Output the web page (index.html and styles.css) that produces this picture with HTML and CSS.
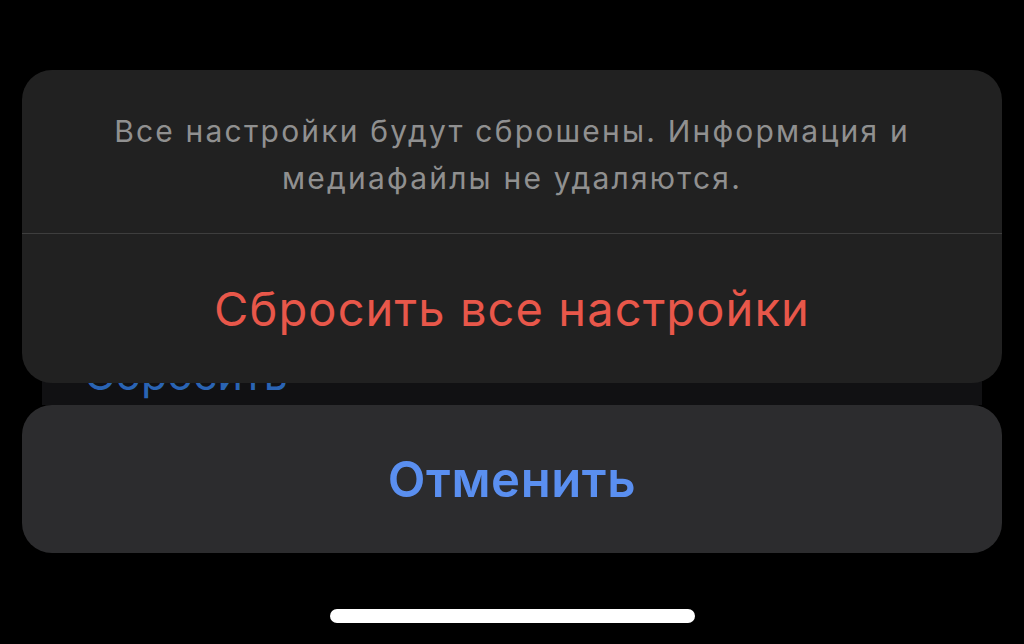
FILE: index.html
```html
<!DOCTYPE html>
<html lang="ru">
<head>
<meta charset="utf-8">
<title>Сбросить все настройки</title>
<link rel="stylesheet" href="styles.css">
</head>
<body>
<div class="screen">
  <!-- list row behind the action sheet -->
  <div class="backdrop">
    <span class="backdrop-link">Сбросить</span>
  </div>

  <div class="sheet">
    <div class="message">Все настройки будут сброшены. Информация и<br>медиафайлы не удаляются.</div>
    <div class="action destructive">Сбросить все настройки</div>
  </div>

  <div class="cancel">Отменить</div>

  <div class="home-bar"></div>
</div>
</body>
</html>
```

FILE: styles.css
```css
html, body {
 margin: 0;
 background: #000;
}

.screen {
 position: relative;
 width: 1024px;
 height: 644px;
 padding: 70px 22px 0 22px;
 box-sizing: border-box;
 font-family: Inter, "Noto Sans", sans-serif;
 display: flex;
 flex-direction: column;
}

.backdrop {
 position: absolute;
 left: 42px;
 right: 42px;
 top: 300px;
 height: 105px;
 background: #111113;
}
.backdrop-link {
 position: absolute;
 left: 42px;
 top: 48px;
 font-size: 43px;
 color: #2a64b4;
}

.sheet {
 position: relative;
 height: 313px;
 border-radius: 30px;
 background: #212121;
 display: flex;
 flex-direction: column;
}

.message {
 height: 164px;
 border-bottom: 1px solid #3e3e3e;
 display: flex;
 align-items: center;
 justify-content: center;
 text-align: center;
 font-size: 30px;
 line-height: 47px;
 letter-spacing: 2.2px;
 color: #909090;
 padding-top: 6px;
 box-sizing: border-box;
}

.action {
 flex: 1;
 display: flex;
 align-items: center;
 justify-content: center;
 font-size: 47px;
 letter-spacing: 1.1px;
}
.destructive { color: #e8574a; }

.cancel {
 position: relative;
 margin-top: 22px;
 height: 148px;
 border-radius: 30px;
 background: #2c2c2e;
 display: flex;
 align-items: center;
 justify-content: center;
 font-size: 49px;
 font-weight: 600;
 letter-spacing: 0.6px;
 color: #5a8ff0;
}

.home-bar {
 width: 365px;
 height: 14px;
 border-radius: 7px;
 background: #fff;
 margin: 56px auto 0 auto;
}
```
